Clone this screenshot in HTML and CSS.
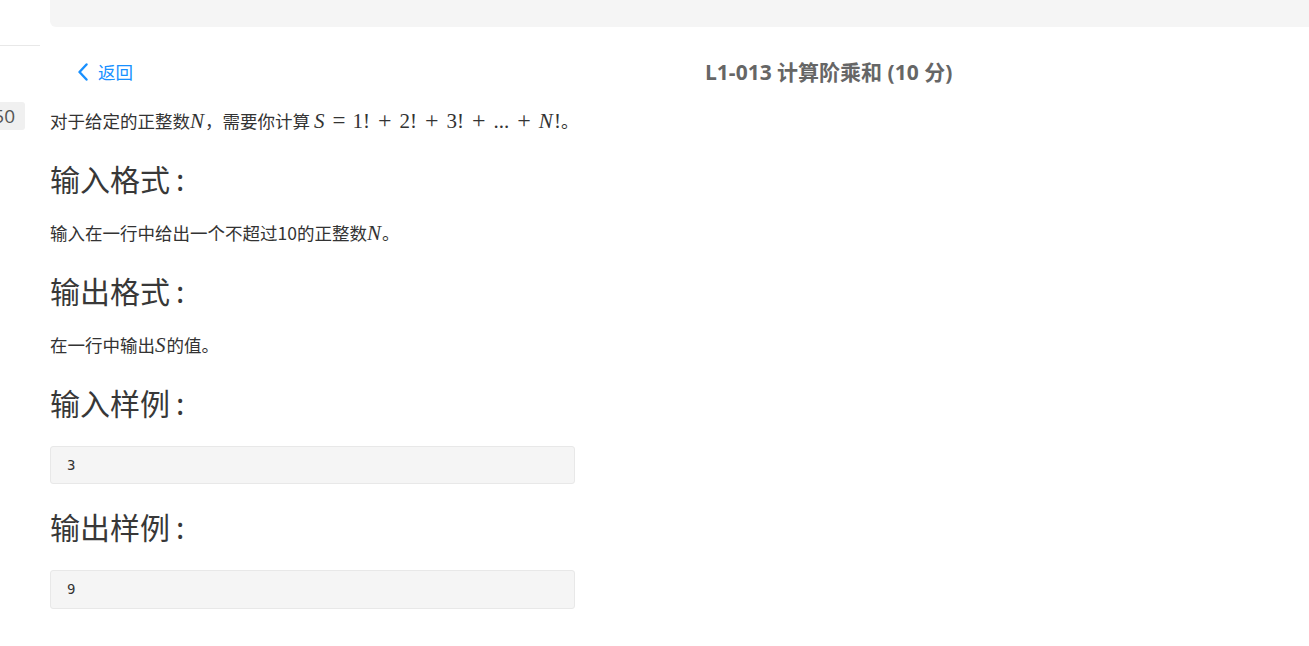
FILE: index.html
```html
<!DOCTYPE html>
<html lang="zh-CN">
<head>
<meta charset="utf-8">
<title>L1-013 计算阶乘和</title>
<link rel="stylesheet" href="styles.css">
</head>
<body>
<div class="layout">
  <aside class="sidebar">
    <div class="side-line"></div>
    <div class="side-count"><span>150</span></div>
  </aside>
  <main class="main">
    <div class="topbar"></div>
    <header class="header">
      <a class="back" href="#">
        <svg class="back-icon" width="12" height="18" viewBox="0 0 12 18" aria-hidden="true"><path d="M9.5 1.5 L2.5 9 L9.5 16.5" fill="none" stroke="currentColor" stroke-width="2.4" stroke-linecap="round" stroke-linejoin="round"/></svg>
        <span>返回</span>
      </a>
      <h1 class="title">L1-013 计算阶乘和 (10 分)</h1>
    </header>
    <section class="problem">
      <p>对于给定的正整数<span class="mi">N</span>，需要你计算 <span class="math"><span class="mi">S</span><span class="rel">=</span><span class="mn">1!</span><span class="bin">+</span><span class="mn">2!</span><span class="bin">+</span><span class="mn">3!</span><span class="bin">+</span><span class="mn">...</span><span class="bin">+</span><span class="mi">N</span><span class="mn">!</span></span>。</p>
      <h2>输入格式<span class="colon">:</span></h2>
      <p>输入在一行中给出一个不超过10的正整数<span class="mi">N</span>。</p>
      <h2>输出格式<span class="colon">:</span></h2>
      <p>在一行中输出<span class="mi">S</span>的值。</p>
      <h2>输入样例<span class="colon">:</span></h2>
      <pre class="sample">3</pre>
      <h2>输出样例<span class="colon">:</span></h2>
      <pre class="sample sample-out">9</pre>
    </section>
  </main>
</div>
</body>
</html>
```
FILE: styles.css
```css
html, body {
  margin: 0;
  padding: 0;
  background: #ffffff;
  overflow: hidden;
}
body {
  font-family: "Open Sans", "Noto Sans CJK SC", sans-serif;
  color: #333333;
}
.layout {
  display: flex;
  gap: 10px;
  width: 1309px;
}
.sidebar {
  width: 40px;
  flex: none;
  padding-top: 45px;
}
.side-line {
  height: 1px;
  background: #e8e8e8;
}
.side-count {
  margin-top: 56px;
  width: 25px;
  height: 28px;
  background: #f0f0f0;
  border-radius: 0 3px 3px 0;
  overflow: hidden;
  display: flex;
  justify-content: flex-end;
  align-items: center;
}
.side-count span {
  font-family: "Open Sans", sans-serif;
  font-size: 19px;
  color: #555555;
  padding-right: 10px;
  white-space: nowrap;
}
.main {
  flex: 1;
  min-width: 0;
}
.topbar {
  height: 27px;
  background: #f5f5f5;
  border-bottom-left-radius: 6px;
}
.header {
  display: flex;
  align-items: center;
  height: 44px;
  margin-top: 23px;
  padding-left: 27px;
}
.back {
  display: flex;
  align-items: center;
  gap: 9px;
  color: #1890ff;
  text-decoration: none;
  font-family: "Noto Sans CJK SC", sans-serif;
  font-size: 17.5px;
  line-height: 24px;
}
.back-icon {
  display: block;
}
.title {
  margin: 0 0 0 572px;
  font-family: "Open Sans", "Noto Sans CJK SC", sans-serif;
  font-size: 21px;
  font-weight: 700;
  color: #666666;
  line-height: 28px;
  white-space: nowrap;
}
.problem {
  margin-top: 14px;
  font-family: "Noto Sans CJK SC", sans-serif;
  font-size: 17.5px;
}
.problem p {
  margin: 0;
  line-height: 26px;
  color: #333333;
}
.problem h2 {
  margin: 24px 0 22px;
  font-family: "Noto Sans CJK SC", sans-serif;
  font-size: 30px;
  font-weight: 400;
  line-height: 40px;
  color: #383838;
}
.problem .sample + h2 {
  margin-top: 22px;
}
.colon {
  margin-left: 6px;
}
.mi {
  font-family: "Liberation Serif", serif;
  font-style: italic;
  font-size: 21px;
  padding-right: 1px;
}
.mn {
  font-family: "Liberation Serif", serif;
  font-size: 21px;
}
.rel {
  font-family: "Liberation Serif", serif;
  font-size: 23px;
  line-height: 1;
  margin: 0 7px;
}
.bin {
  font-family: "Liberation Serif", serif;
  font-size: 24px;
  line-height: 1;
  margin: 0 8px;
}
.sample {
  margin: 24px 0 0;
  padding: 9px 16px;
  box-sizing: border-box;
  width: 525px;
  background: #f5f5f5;
  border: 1px solid #e8e8e8;
  border-radius: 3px;
  font-family: "DejaVu Sans Mono", monospace;
  font-size: 14px;
  line-height: 18px;
  color: #333333;
}
.sample-out {
  padding-bottom: 10px;
}
```
